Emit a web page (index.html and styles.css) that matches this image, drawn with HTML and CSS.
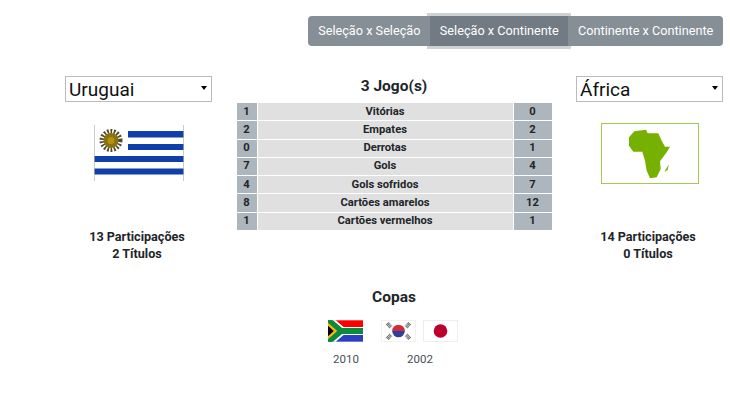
FILE: index.html
```html
<!DOCTYPE html>
<html lang="pt-BR">
<head>
    <meta charset="UTF-8">
    <title>Comparador de Copas</title>
    <link rel="stylesheet" href="styles.css">
</head>
<body>

<div class="page">
    <div class="mode-bar">
        <button class="mode-btn">Seleção x Seleção</button>
        <button class="mode-btn active">Seleção x Continente</button>
        <button class="mode-btn">Continente x Continente</button>
    </div>

    <div class="compare">
        <div class="team">
            <div class="select-wrap">
                <select class="team-select">
                    <option>Uruguai</option>
                </select>
            </div>
            <div class="team-flag">
                <svg class="flag-uruguay" viewBox="0 0 90 56">
                    <rect width="90" height="56" fill="#fff"/>
                    <rect x="34" y="6" width="56" height="6.5" fill="#0f3fa8"/>
                    <rect x="34" y="19" width="56" height="6" fill="#0f3fa8"/>
                    <rect y="31" width="90" height="6" fill="#0f3fa8"/>
                    <rect y="43.5" width="90" height="6" fill="#0f3fa8"/>
                    <rect width="0.7" height="56" fill="#b5b5b5"/>
                    <rect x="89.3" width="0.7" height="56" fill="#b5b5b5"/>
                    <circle cx="17" cy="15.5" r="9" fill="none" stroke="#4f4a2a" stroke-width="5" stroke-dasharray="1.7 1.5"/>
                    <circle cx="17" cy="15.5" r="7.5" fill="#8a7210"/>
                    <circle cx="17" cy="15.5" r="3.5" fill="#b0930f"/>
                </svg>
            </div>
            <p class="team-stats">13 Participações<br>2 Títulos</p>
        </div>

        <div class="summary">
            <h2 class="summary-title">3 Jogo(s)</h2>
            <table class="stats">
                <tr><td class="num">1</td><td>Vitórias</td><td class="num">0</td></tr>
                <tr><td class="num">2</td><td>Empates</td><td class="num">2</td></tr>
                <tr><td class="num">0</td><td>Derrotas</td><td class="num">1</td></tr>
                <tr><td class="num">7</td><td>Gols</td><td class="num">4</td></tr>
                <tr><td class="num">4</td><td>Gols sofridos</td><td class="num">7</td></tr>
                <tr><td class="num">8</td><td>Cartões amarelos</td><td class="num">12</td></tr>
                <tr><td class="num">1</td><td>Cartões vermelhos</td><td class="num">1</td></tr>
            </table>
        </div>

        <div class="team">
            <div class="select-wrap">
                <select class="team-select">
                    <option>África</option>
                </select>
            </div>
            <div class="team-flag">
                <svg class="flag-africa" viewBox="0 0 98 61">
                    <rect x="0.5" y="0.5" width="97" height="60" fill="#fff" stroke="#a3c94f"/>
                    <path d="M28 14.3L33.3 8.3 45 6.7 46.7 10.3 57.3 10.3 60.7 17.7 64 23.7 69 23.7 65.7 29.3 59 38.3 59.7 46 55.7 54.3 49 55.3 45.7 47.7 44 37.7 41.3 28.7 32.3 28.7 28 22.7Z" fill="#76b000"/>
                    <path d="M64 47.7L68 41 66.7 46.7 64 48.7Z" fill="#76b000"/>
                </svg>
            </div>
            <p class="team-stats">14 Participações<br>0 Títulos</p>
        </div>
    </div>

    <div class="cups">
        <h2 class="cups-title">Copas</h2>
        <div class="cups-list">
            <div class="cup">
                <div class="cup-flags">
                    <svg class="cup-flag" viewBox="0 0 36 22">
                        <rect width="36" height="11" fill="#f00"/>
                        <rect y="11" width="36" height="11" fill="#2a3fc0"/>
                        <path d="M4 0H8L16 7H36V15H16L8 22H4Z" fill="#fff"/>
                        <path d="M0 0H5L14.5 8H36V14H14.5L5 22H0Z" fill="#0a8a3c"/>
                        <path d="M0 2.5L9.5 11 0 19.5Z" fill="#ffb612"/>
                        <path d="M0 5.5L6 11 0 16.5Z" fill="#000"/>
                    </svg>
                </div>
                <span class="cup-year">2010</span>
            </div>
            <div class="cup">
                <div class="cup-flags">
                    <svg class="cup-flag" viewBox="0 0 36 22">
                        <rect x="0.25" y="0.25" width="35.5" height="21.5" fill="#fff" stroke="#e4e4e4" stroke-width="0.5"/>
                        <path d="M11.5 11a6.5 6.5 0 0 1 13 0z" fill="#cd2e3a"/>
                        <path d="M11.5 11a6.5 6.5 0 0 0 13 0z" fill="#2f3f9e"/>
                        <g stroke="#666" stroke-width="4" stroke-dasharray="1 0.5">
                            <path d="M6.5 3L10 7"/>
                            <path d="M29.5 3L26 7"/>
                            <path d="M6.5 19L10 15"/>
                            <path d="M29.5 19L26 15"/>
                        </g>
                    </svg>
                    <svg class="cup-flag" viewBox="0 0 36 22">
                        <rect x="0.25" y="0.25" width="35.5" height="21.5" fill="#fff" stroke="#dcdcdc" stroke-width="0.5"/>
                        <circle cx="18" cy="11" r="7" fill="#bc002d"/>
                    </svg>
                </div>
                <span class="cup-year">2002</span>
            </div>
        </div>
    </div>
</div>

</body>
</html>
```

FILE: styles.css
```css
body {
    font-family: 'Roboto', sans-serif;
    margin: 0;
    padding: 0;
    background-color: #fff;
    color: #212529;
}
.page {
    padding: 16px 7px 0 65px;
}
.mode-bar {
    display: flex;
    justify-content: flex-end;
}
.mode-btn {
    font-family: 'Roboto', sans-serif;
    font-size: 12.7px;
    color: #fff;
    background: #868e96;
    border: none;
    height: 30px;
    padding: 0 9.7px 1px;
    white-space: nowrap;
}
.mode-btn:first-child {
    border-radius: 4px 0 0 4px;
}
.mode-btn:last-child {
    border-radius: 0 4px 4px 0;
}
.mode-btn.active {
    background: #727b84;
    box-shadow: 0 0 0 3px rgba(134, 142, 150, 0.4);
    position: relative;
}
.compare {
    display: flex;
    justify-content: space-between;
    margin-top: 30px;
}
.team {
    width: 147px;
    text-align: center;
}
.select-wrap {
    position: relative;
}
.select-wrap::after {
    content: "";
    position: absolute;
    top: 10px;
    right: 5px;
    border-left: 3px solid transparent;
    border-right: 3px solid transparent;
    border-top: 4px solid #000;
}
.team-select {
    display: block;
    width: 147px;
    height: 26px;
    font-family: 'Roboto', sans-serif;
    font-size: 19px;
    color: #111;
    background: #fff;
    border: 1px solid #bbb;
    border-radius: 0;
    padding: 0 0 0 3px;
    appearance: none;
}
.team-flag {
    display: flex;
    justify-content: center;
    height: 61px;
    margin-top: 21px;
}
.flag-uruguay {
    width: 90px;
    height: 56px;
    margin-top: 2px;
}
.flag-africa {
    width: 98px;
    height: 61px;
}
.team-stats {
    margin: 44px 0 0;
    padding-right: 3px;
    font-size: 12.6px;
    font-weight: 700;
    line-height: 17px;
}
.summary {
    width: 315px;
    text-align: center;
}
.summary-title {
    margin: 0;
    font-size: 15.5px;
    font-weight: 700;
    line-height: 20px;
}
.stats {
    width: 100%;
    height: 128px;
    margin-top: 7px;
    border-collapse: collapse;
    font-size: 11.2px;
    font-weight: 700;
}
.stats td {
    padding: 0;
    background: #e0e0e0;
    border: 1px solid #fff;
    line-height: 16px;
}
.stats tr:first-child td {
    border-top: none;
}
.stats td:first-child {
    border-left: none;
}
.stats td:last-child {
    border-right: none;
}
.stats .num {
    width: 38px;
    background: #adb5bd;
}
.stats td.num:first-child {
    width: 20px;
}
.cups {
    margin-top: 25px;
    text-align: center;
}
.cups-title {
    margin: 0;
    font-size: 15.5px;
    font-weight: 700;
    line-height: 20px;
}
.cups-list {
    display: flex;
    justify-content: center;
    gap: 18px;
    margin-top: 13px;
    padding-right: 3px;
}
.cup-flags {
    display: flex;
    gap: 7px;
}
.cup-flag {
    width: 35px;
    height: 22px;
}
.cup-year {
    display: block;
    margin-top: 10px;
    padding-left: 2px;
    font-size: 11.5px;
    color: #495057;
}
```
